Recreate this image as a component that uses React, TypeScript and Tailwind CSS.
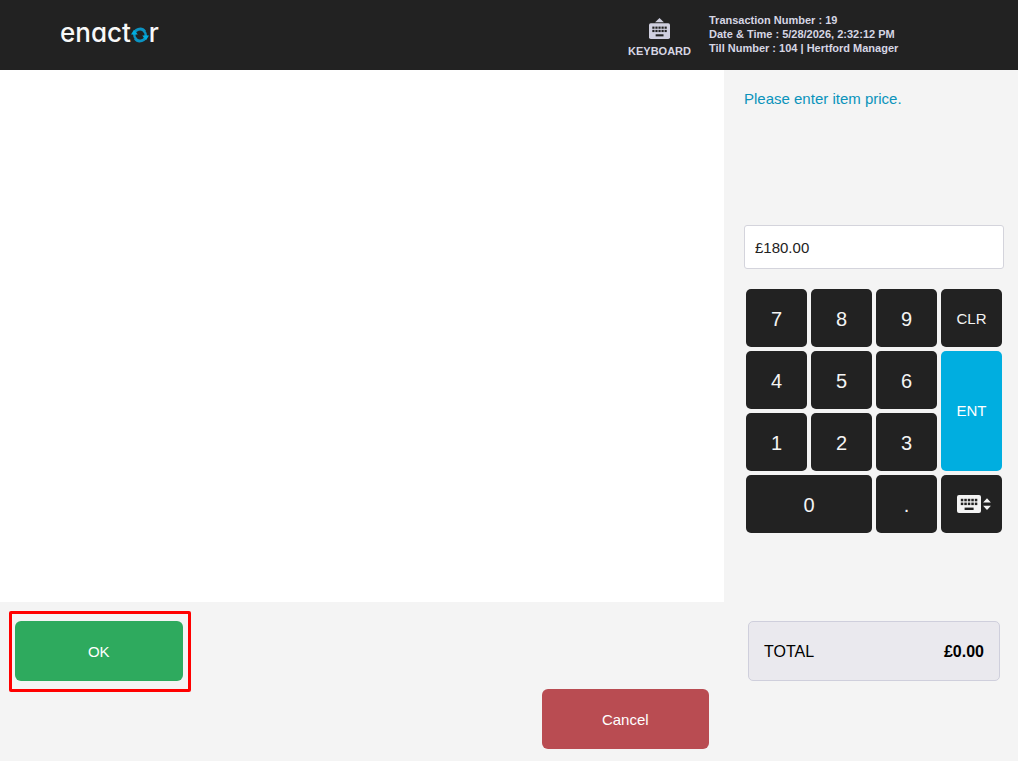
import { useState } from "react";

const KEY =
  "flex items-center justify-center rounded-[5px] bg-[#222222] pt-0.5 text-[#f4f4f4]";

function EnactorLogo() {
  return (
    <div
      aria-label="enactor"
      className="mb-1 flex items-center font-['Inter','Lato',sans-serif] text-[26px] leading-8 font-medium text-[#f8f8f8] [font-feature-settings:'cv11']"
    >
      <span>enact</span>
      <svg viewBox="0 0 18 16" className="mt-1 h-4 w-[18px]" aria-hidden="true">
        <path d="M3.2 8A5.8 5.8 0 0 1 13.8 4.6" fill="none" stroke="#0b93c2" strokeWidth="2.8" />
        <path d="M14.8 8A5.8 5.8 0 0 1 4.2 11.4" fill="none" stroke="#0b93c2" strokeWidth="2.8" />
        <path d="M13.2 4.2a5.8 5.8 0 0 1 1.5 4" fill="none" stroke="#0b93c2" strokeWidth="2.4" />
        <path d="M4.8 11.8a5.8 5.8 0 0 1-1.5-4" fill="none" stroke="#0b93c2" strokeWidth="2.4" />
        <path d="M11.2 8.4H18l-3 4.8z" fill="#00aee0" />
        <path d="M0 7.6h6.8L3 2.8z" fill="#00aee0" />
      </svg>
      <span>r</span>
    </div>
  );
}

function KeyboardBody({ fill, hole }: { fill: string; hole: string }) {
  return (
    <g>
      <rect width="24" height="18" rx="2" fill={fill} />
      {[0, 1, 2, 3, 4].map((i) => (
        <g key={i} fill={hole}>
          <rect x={3.8 + i * 3.5} y="3.8" width="2.5" height="2.5" />
          <rect x={3.8 + i * 3.5} y="7.6" width="2.5" height="2.5" />
        </g>
      ))}
      <rect x="7.6" y="12.6" width="9" height="2.4" fill={hole} />
    </g>
  );
}

function Header() {
  return (
    <header className="flex h-[70px] items-center bg-[#222222] pl-[60px] text-[#d6d6e4]">
      <EnactorLogo />
      <button type="button" className="mt-1.5 ml-auto flex flex-col items-center text-[11px] leading-[14px] font-bold">
        <svg viewBox="0 0 24 24" className="mb-[5px] size-[21px]" aria-hidden="true">
          <path d="M12 0l5 4.8H7z" fill="#d0d0e0" />
          <g transform="translate(0 6)">
            <KeyboardBody fill="#d0d0e0" hole="#222222" />
          </g>
        </svg>
        KEYBOARD
      </button>
      <div className="mb-0.5 ml-[18px] w-[309px] text-[11px] leading-[14px] font-bold">
        <p>Transaction Number : 19</p>
        <p>Date &amp; Time : 5/28/2026, 2:32:12 PM</p>
        <p>Till Number : 104 | Hertford Manager</p>
      </div>
    </header>
  );
}

function Keypad({ onKey, onClear }: { onKey: (key: string) => void; onClear: () => void }) {
  const digit = (key: string, extra = "") => (
    <button key={key} type="button" onClick={() => onKey(key)} className={`${KEY} text-xl ${extra}`}>
      {key}
    </button>
  );
  return (
    <div className="mx-0.5 mt-5 grid auto-rows-[58px] grid-cols-4 gap-1">
      {["7", "8", "9"].map((k) => digit(k))}
      <button type="button" onClick={onClear} className={`${KEY} text-[15px]`}>
        CLR
      </button>
      {["4", "5", "6"].map((k) => digit(k))}
      <button
        type="button"
        className="row-span-2 flex items-center justify-center rounded-[5px] bg-[#00aee0] text-[15px] text-white"
      >
        ENT
      </button>
      {["1", "2", "3"].map((k) => digit(k))}
      {digit("0", "col-span-2")}
      {digit(".")}
      <button type="button" aria-label="Toggle keyboard" className={`${KEY} pb-0.5 pl-1`}>
        <svg viewBox="0 0 34 18" className="h-[18px] w-[34px]" aria-hidden="true">
          <KeyboardBody fill="#f4f4f4" hole="#222222" />
          <path d="M30 3.2l3.9 4.4h-7.8zM30 15.1l3.9-4.4h-7.8z" fill="#f4f4f4" />
        </svg>
      </button>
    </div>
  );
}

export default function App() {
  const [price, setPrice] = useState("£180.00");

  return (
    <div className="flex min-h-screen flex-col bg-[#f4f4f4] font-['Liberation_Sans',Arial,sans-serif] text-black">
      <Header />
      <div className="flex flex-1">
        <main className="flex flex-1 flex-col">
          <div className="flex-1 bg-white" />
          <div className="grid auto-rows-[60px] grid-cols-4 gap-2 px-[15px] pt-[19px] pb-3 text-[15px] text-white">
            <div className="relative flex">
              <button type="button" className="flex-1 rounded-md bg-[#2eaa5e] pt-0.5">
                OK
              </button>
              <div className="pointer-events-none absolute -top-2.5 -right-2 -bottom-[11px] -left-1.5 rounded-xs border-3 border-[#ff0000]" />
            </div>
            <button type="button" className="col-start-4 row-start-2 rounded-md bg-[#b94c52] pt-0.5">
              Cancel
            </button>
          </div>
        </main>
        <aside className="flex w-[294px] flex-col pt-5 pr-3.5 pb-20 pl-5">
          <label htmlFor="price" className="h-[135px] text-[15px] leading-[18px] text-[#0a93bb]">
            Please enter item price.
          </label>
          <input
            id="price"
            value={price}
            onChange={(e) => setPrice(e.target.value)}
            className="h-11 w-full rounded-[3px] border border-[#d4d4dc] bg-white px-2.5 text-[15px] text-[#222222] outline-none"
          />
          <Keypad onKey={(k) => setPrice((p) => p + k)} onClear={() => setPrice("")} />
          <div className="mx-1 mt-auto flex h-[60px] items-center justify-between rounded-[5px] border border-[#cfcfdc] bg-[#eae9ee] px-[15px] pt-0.5 text-base">
            <span>TOTAL</span>
            <strong>£0.00</strong>
          </div>
        </aside>
      </div>
    </div>
  );
}
